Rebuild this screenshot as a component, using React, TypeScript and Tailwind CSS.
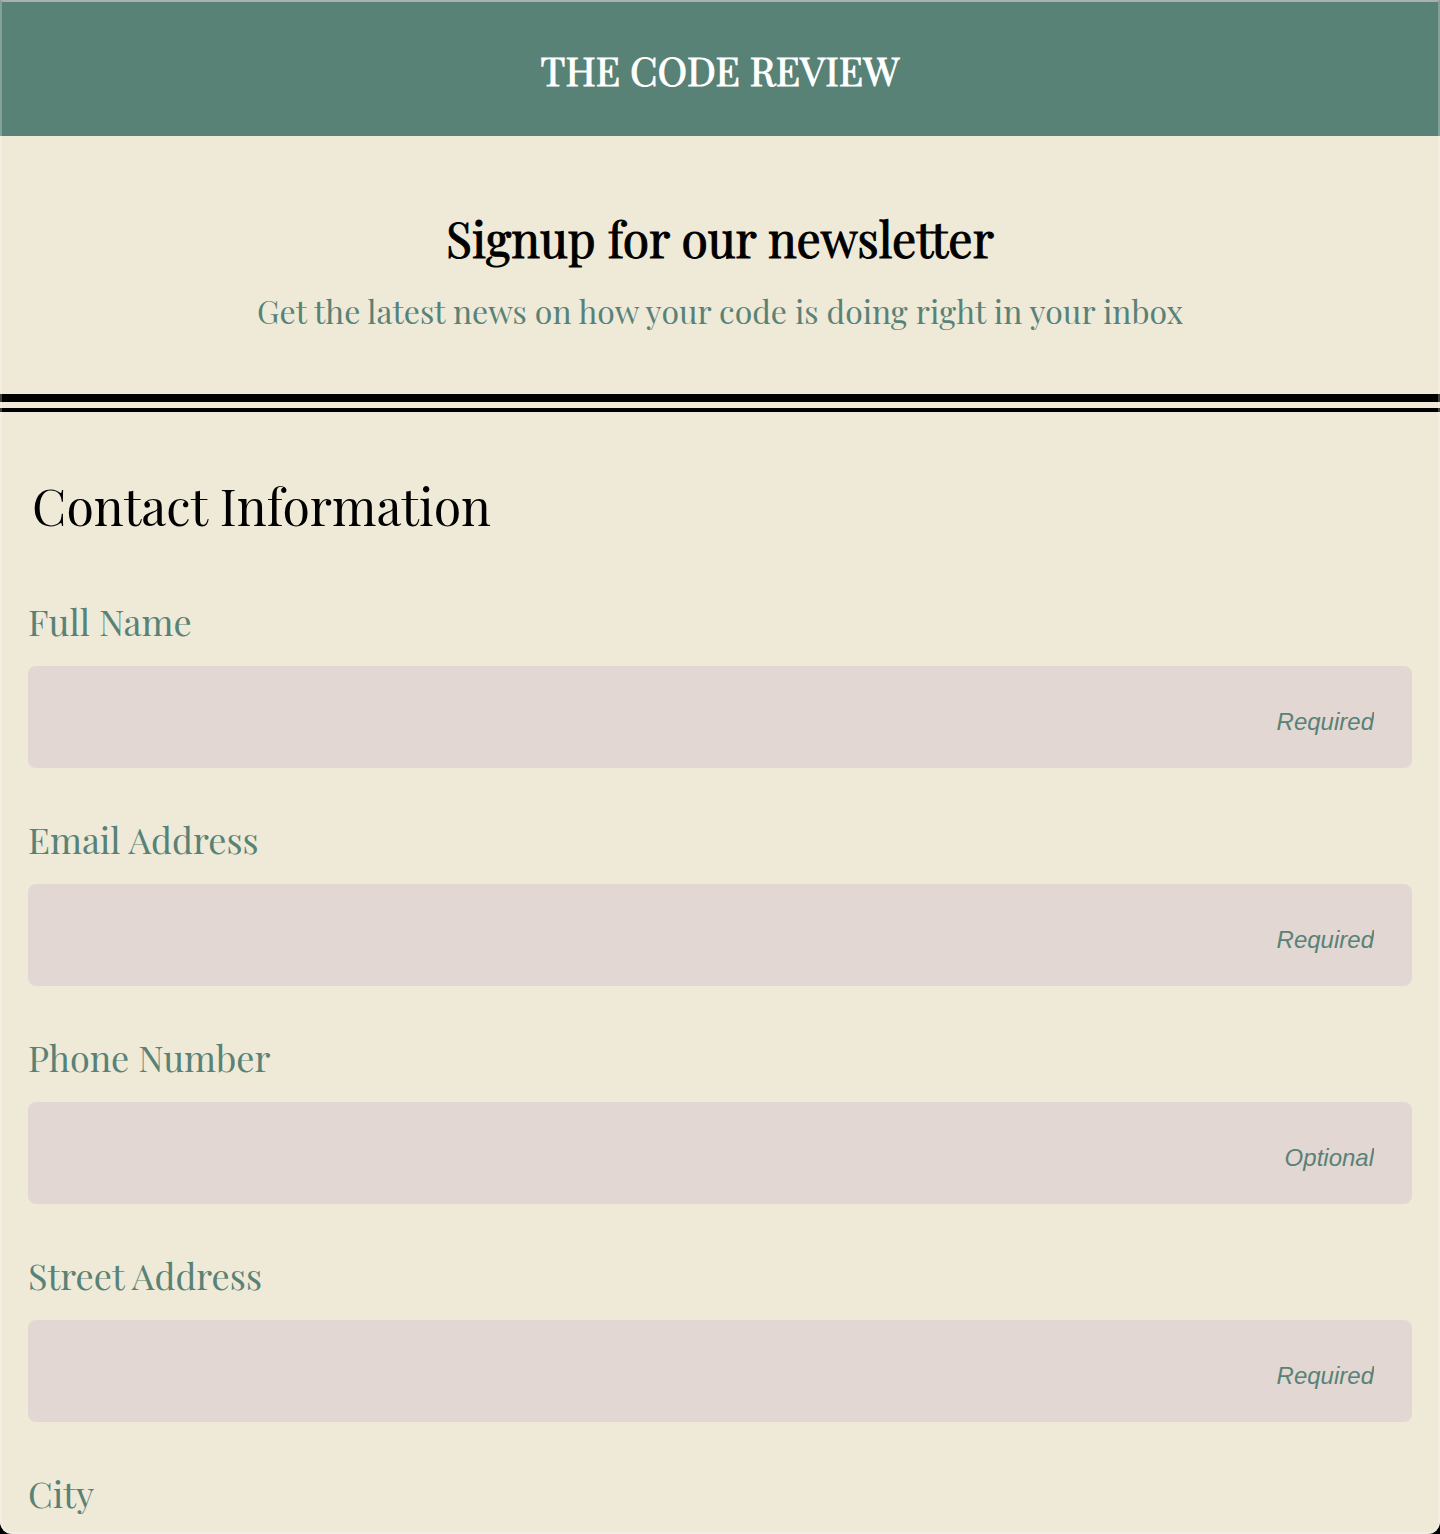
const fields = [
  { id: "name", label: "Full Name", hint: "Required", type: "text" },
  { id: "email", label: "Email Address", hint: "Required", type: "email" },
  { id: "phone", label: "Phone Number", hint: "Optional", type: "tel" },
  { id: "street", label: "Street Address", hint: "Required", type: "text" },
];

export default function App() {
  return (
    <div className="bg-black">
      <div className="relative min-h-screen overflow-hidden rounded-b-xl bg-[#efe9d7] pb-[18px] font-['Playfair_Display','Liberation_Serif',serif] text-black">
        <header className="bg-[#598277] pt-12 pb-11 text-center text-[40px] leading-[44px] text-white">
          <h1 className="[-webkit-text-stroke:1px_white]">THE CODE REVIEW</h1>
        </header>
        <section className="pt-[72px] pb-[60px] text-center">
          <h2 className="text-5xl leading-[60px] [-webkit-text-stroke:1px_black]">Signup for our newsletter</h2>
          <p className="mt-5 text-[32px] leading-[46px] text-[#598277]">Get the latest news on how your code is doing right in your inbox</p>
        </section>
        <div className="h-[18px] border-t-8 border-b-4 border-black" />
        <form className="px-7">
          <h2 className="mt-16 ml-1 text-[50px] leading-[60px]">Contact Information</h2>
          {fields.map((f) => (
            <div key={f.id} className="mt-12 first-of-type:mt-[62px]">
              <label htmlFor={f.id} className="block text-4xl leading-[46px] text-[#598277]">{f.label}</label>
              <input id={f.id} type={f.type} placeholder={f.hint} className="mt-[22px] block h-[102px] w-full rounded-lg bg-[#e2d7d2] px-[38px] pt-[10px] text-right font-['Liberation_Sans',sans-serif] text-2xl italic text-[#598277] placeholder:text-[#598277]" />
            </div>
          ))}
          <label htmlFor="city" className="mt-12 block text-4xl leading-[46px] text-[#598277]">City</label>
        </form>
        {/* thin highlight along the window edge */}
        <div className="pointer-events-none absolute inset-0 rounded-b-xl border-2 border-white/25 border-t-[#adaeb2]" />
      </div>
    </div>
  );
}
